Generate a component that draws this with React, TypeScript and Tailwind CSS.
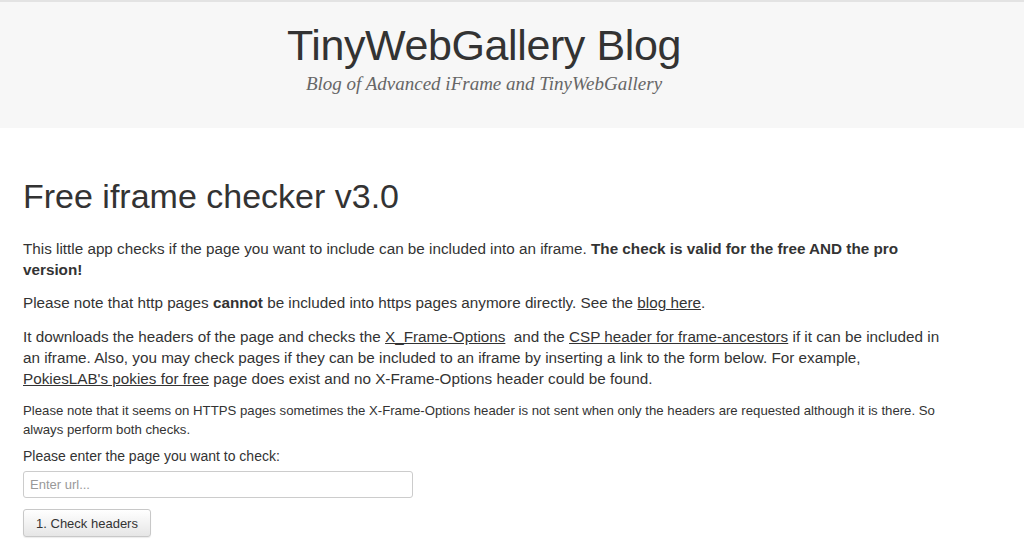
import React from 'react';

const sans = "font-['Helvetica_Neue','Liberation_Sans',Arial,sans-serif]";

export default function App() {
  return (
    <div className={`min-h-screen bg-white text-[#333] ${sans}`}>
      <header className="h-[128px] border-t-2 border-[#e3e3e3] bg-[#f7f7f7]">
        <div className="flex flex-col items-center pr-[56px] pt-[20px]">
          <h1 className="text-[43px] leading-[46px] font-normal text-[#333] tracking-[-0.4px]">
            TinyWebGallery Blog
          </h1>
          <p className="mt-[4px] font-['Liberation_Serif','Times_New_Roman',serif] text-[19px] italic leading-[24px] text-[#666]">
            Blog of Advanced iFrame and TinyWebGallery
          </p>
        </div>
      </header>

      <main className="w-[941px] pl-[23px] pt-[49px]">
        <h2 className="text-[34px] font-normal leading-[38px] text-[#333]">Free iframe checker v3.0</h2>

        <div className="mt-[23px] text-[15.25px] leading-[21px]">
          <p className="mb-[12px]">
            This little app checks if the page you want to include can be included into an iframe.{' '}
            <b>The check is valid for the free AND the pro version!</b>
          </p>
          <p className="mb-[13px]">
            Please note that http pages <b>cannot</b> be included into https pages anymore directly. See the{' '}
            <a href="#" className="underline">blog here</a>.
          </p>
          <p className="mb-[12px]">
            It downloads the headers of the page and checks the{' '}
            <a href="#" className="underline">X_Frame-Options</a>&nbsp; and the{' '}
            <a href="#" className="underline">CSP header for frame-ancestors</a> if it can be included in an
            iframe. Also, you may check pages if they can be included to an iframe by inserting a link to the form
            below. For example, <a href="#" className="underline">PokiesLAB's pokies for free</a> page does exist
            and no X-Frame-Options header could be found.
          </p>
          <p className="mb-[7px] text-[13.2px] leading-[19px]">
            Please note that it seems on HTTPS pages sometimes the X-Frame-Options header is not sent when only the
            headers are requested although it is there. So always perform both checks.
          </p>
          <form onSubmit={(e) => e.preventDefault()}>
            <label className="block text-[14px] leading-[20px]">Please enter the page you want to check:</label>
            <input
              type="text"
              placeholder="Enter url..."
              className="mt-[5px] block h-[27px] w-[390px] rounded-[3px] border border-[#ccc] bg-white px-[6px] text-[13px] placeholder-[#999] focus:outline-none"
            />
            <button
              type="submit"
              className="mt-[11px] h-[28px] w-[128px] rounded-[3px] border border-[#c8c8c8] bg-gradient-to-b from-white to-[#e6e6e6] text-[13px] leading-none text-[#333] shadow-[0_1px_1px_rgba(0,0,0,0.08)]"
            >
              1. Check headers
            </button>
          </form>
        </div>
      </main>
    </div>
  );
}
